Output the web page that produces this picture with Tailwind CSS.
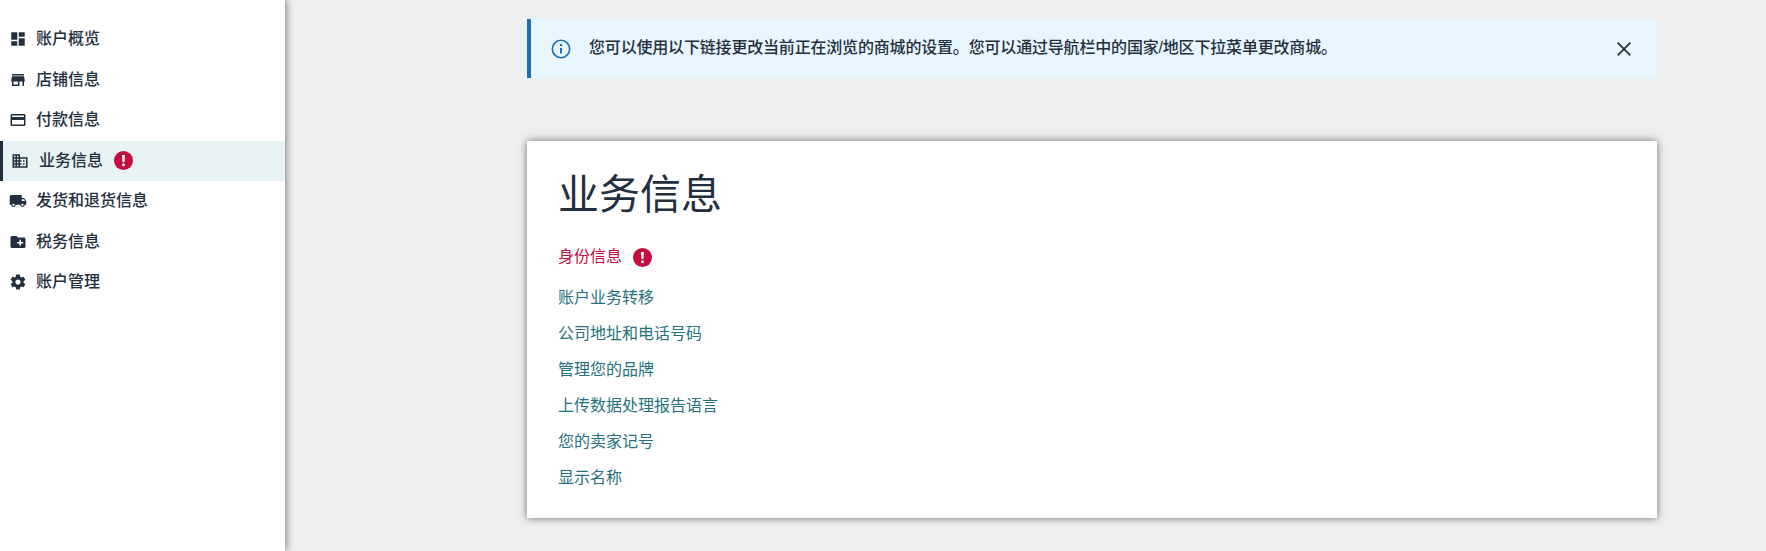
<!DOCTYPE html>
<html lang="zh-CN"><head><meta charset="utf-8">
<script src="https://cdn.jsdelivr.net/npm/@tailwindcss/browser@4"></script>
</head>
<body class="m-0 h-[551px] w-[1766px] overflow-hidden bg-[#eeeff1] font-['Liberation_Sans','Noto_Sans_CJK_SC',sans-serif] text-[#232f3e]">
<div class="flex h-[551px]">
  <aside class="h-full w-[285px] shrink-0 bg-white pt-[19px] shadow-[2px_0_7px_rgba(0,0,0,0.4)]">
    <nav class="flex flex-col text-base font-medium">
      <a class="flex h-[40.5px] items-center pl-[9px]"><svg class="mr-[9px] h-[18px] w-[18px]" viewBox="0 0 24 24" fill="#232f3e"><path d="M3 13h8V3H3v10zm0 8h8v-6H3v6zm10 0h8V11h-8v10zm0-18v6h8V3h-8z"/></svg>账户概览</a>
      <a class="flex h-[40.5px] items-center pl-[9px]"><svg class="mr-[9px] h-[18px] w-[18px]" viewBox="0 0 24 24" fill="#232f3e"><path d="M20 4H4v2h16V4zm1 10v-2l-1-5H4l-1 5v2h1v6h10v-6h4v6h2v-6h1zm-9 4H6v-4h6v4z"/></svg>店铺信息</a>
      <a class="flex h-[40.5px] items-center pl-[9px]"><svg class="mr-[9px] h-[18px] w-[18px]" viewBox="0 0 24 24" fill="#232f3e"><path d="M20 4H4c-1.110 0-1.990.890-1.990 2L2 18c0 1.110.890 2 2 2h16c1.110 0 2-.890 2-2V6c0-1.110-.890-2-2-2zm0 14H4v-6h16v6zm0-10H4V6h16v2z"/></svg>付款信息</a>
      <a class="flex h-[40.5px] items-center border-l-[3px] border-[#232f3e] bg-[#e7f3f5] pl-[8px]"><svg class="mr-[10px] h-[18px] w-[18px]" viewBox="0 0 24 24" fill="#232f3e"><path d="M12 7V3H2v18h20V7H10zM6 19H4v-2h2v2zm0-4H4v-2h2v2zm0-4H4V9h2v2zm0-4H4V5h2v2zm4 12H8v-2h2v2zm0-4H8v-2h2v2zm0-4H8V9h2v2zm0-4H8V5h2v2zm10 12h-8v-2h2v-2h-2v-2h2v-2h-2V9h8v10zm-2-8h-2v2h2v-2zm0 4h-2v2h2v-2z"/></svg>业务信息<span class="ml-[11px] flex h-[19px] w-[19px] items-center justify-center rounded-full bg-[#c40d3e]"><svg class="h-[13px] w-[5px]" viewBox="0 0 5 13" fill="white"><path d="M1 1h3L3.500 8h-2z"/><circle cx="2.500" cy="10.800" r="1.500"/></svg></span></a>
      <a class="flex h-[40.5px] items-center pl-[9px]"><svg class="mr-[9px] h-[18px] w-[18px]" viewBox="0 0 24 24" fill="#232f3e"><path d="M20 8h-3V4H3c-1.100 0-2 .900-2 2v11h2c0 1.660 1.340 3 3 3s3-1.340 3-3h6c0 1.660 1.340 3 3 3s3-1.340 3-3h2v-5l-3-4zM6 18.500c-.830 0-1.500-.670-1.500-1.500s.670-1.500 1.500-1.500 1.500.670 1.500 1.500-.670 1.500-1.500 1.500zm13.500-9l1.960 2.500H17V9.500h2.500zm-1.500 9c-.830 0-1.500-.670-1.500-1.500s.670-1.500 1.500-1.500 1.500.670 1.500 1.500-.670 1.500-1.500 1.500z"/></svg>发货和退货信息</a>
      <a class="flex h-[40.5px] items-center pl-[9px]"><svg class="mr-[9px] h-[18px] w-[18px]" viewBox="0 0 24 24" fill="#232f3e"><path d="M20 6h-8l-2-2H4c-1.110 0-1.990.890-1.990 2L2 18c0 1.110.890 2 2 2h16c1.110 0 2-.890 2-2V8c0-1.110-.890-2-2-2zm-1 8h-3v3h-2v-3h-3v-2h3V9h2v3h3v2z"/></svg>税务信息</a>
      <a class="flex h-[40.5px] items-center pl-[9px]"><svg class="mr-[9px] h-[18px] w-[18px]" viewBox="0 0 24 24" fill="#232f3e"><path d="M19.430 12.980c.04-.32.070-.640.070-.980s-.03-.660-.07-.980l2.110-1.650c.19-.150.240-.420.120-.640l-2-3.460c-.12-.22-.390-.300-.610-.220l-2.490 1c-.520-.400-1.080-.730-1.690-.980l-.380-2.650C14.460 2.180 14.250 2 14 2h-4c-.250 0-.460.180-.490.420l-.380 2.650c-.610.250-1.170.590-1.690.980l-2.490-1c-.230-.090-.490 0-.610.220l-2 3.460c-.130.220-.070.490.120.640l2.110 1.650c-.04.320-.070.650-.07.980s.03.660.07.980l-2.110 1.650c-.19.150-.240.420-.120.640l2 3.460c.12.220.390.300.610.220l2.490-1c.520.400 1.080.730 1.690.980l.380 2.650c.03.240.240.420.490.420h4c.250 0 .460-.180.490-.420l.380-2.650c.610-.250 1.170-.590 1.690-.980l2.490 1c.230.090.490 0 .610-.220l2-3.460c.12-.22.070-.490-.120-.640l-2.110-1.650zM12 15.500c-1.930 0-3.500-1.570-3.500-3.500s1.570-3.500 3.500-3.500 3.500 1.570 3.500 3.500-1.570 3.500-3.500 3.500z"/></svg>账户管理</a>
    </nav>
  </aside>
  <main class="ml-[242px] w-[1130px] pt-[19px]">
    <div class="flex h-[59px] items-center border-l-4 border-[#1a6fb5] bg-[#e8f6ff] pl-[20px] pr-[26px]">
      <svg class="mr-[18px] h-[20px] w-[20px]" viewBox="0 0 20 20" fill="none" stroke="#1a6fb5" stroke-width="1.600"><circle cx="10" cy="10" r="8.700"/><path d="M10 9v5.500" stroke-width="2"/><circle cx="10" cy="6" r="1.200" fill="#1a6fb5" stroke="none"/></svg>
      <p class="-mt-[2px] flex-1 text-base font-medium tracking-[-0.18px]">您可以使用以下链接更改当前正在浏览的商城的设置。您可以通过导航栏中的国家/地区下拉菜单更改商城。</p>
      <svg class="h-[14px] w-[14px]" viewBox="0 0 14 14" fill="none" stroke="#232f3e" stroke-width="1.700"><path d="M.7.700l12.600 12.600M13.300.700L.7 13.300"/></svg>
    </div>
    <section class="mt-[63px] h-[377px] bg-white pl-[31px] pt-[30px] shadow-[0_0_8px_rgba(0,0,0,0.55)]">
      <h1 class="text-[41px] leading-[48px] font-normal">业务信息</h1>
      <ul class="mt-[20px] text-base leading-[36px] text-[#26717d]">
        <li class="flex h-[36px] items-center text-[#c40d3e]">身份信息<span class="ml-[11px] flex h-[19px] w-[19px] items-center justify-center rounded-full bg-[#c40d3e]"><svg class="h-[13px] w-[5px]" viewBox="0 0 5 13" fill="white"><path d="M1 1h3L3.500 8h-2z"/><circle cx="2.500" cy="10.800" r="1.500"/></svg></span></li>
        <li class="mt-[5px]">账户业务转移</li>
        <li>公司地址和电话号码</li>
        <li>管理您的品牌</li>
        <li>上传数据处理报告语言</li>
        <li>您的卖家记号</li>
        <li>显示名称</li>
      </ul>
    </section>
  </main>
</div>
</body></html>
